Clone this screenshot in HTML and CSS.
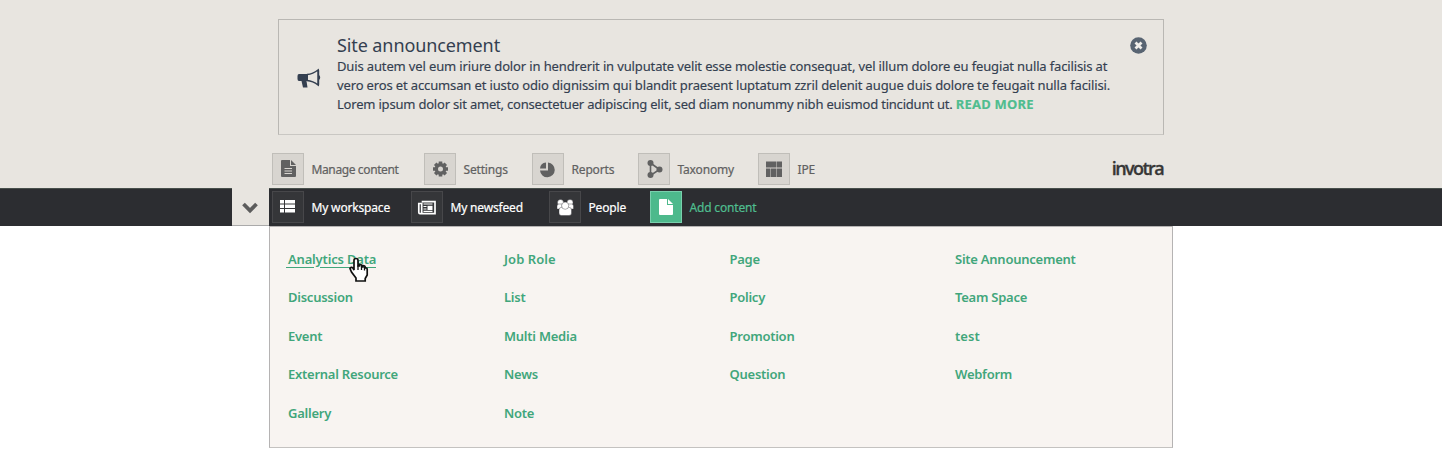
FILE: index.html
```
<!DOCTYPE html>
<html lang="en">
<head>
<meta charset="utf-8">
<title>Invotra</title>
<link rel="stylesheet" href="styles.css">
</head>
<body>
<header class="top">
  <section class="notice">
    <svg class="horn" width="24" height="22" viewBox="0 0 24 22"><path d="M2 6h9v7H9.500l1 6.500H6L4.500 13H2Q.500 13 .500 11V8Q.500 6 2 6Z" fill="#343f50"/><path d="M10 6.500Q16 6 21 2v15Q16 13 10 12.500" fill="none" stroke="#343f50" stroke-width="1.500"/><path d="M21 1q1.200 0 1.200 1.500V7q2 2.500 0 5v4.500q0 1.500-1.200 1.500Z" fill="#343f50"/></svg>
    <div class="notice-body">
      <h1 class="notice-title">Site announcement</h1>
      <p class="notice-text"><span class="line">Duis autem vel eum iriure dolor in hendrerit in vulputate velit esse molestie consequat, vel illum dolore eu feugiat nulla facilisis at</span>
      <span class="line">vero eros et accumsan et iusto odio dignissim qui blandit praesent luptatum zzril delenit augue duis dolore te feugait nulla facilisi.</span>
      <span class="line last">Lorem ipsum dolor sit amet, consectetuer adipiscing elit, sed diam nonummy nibh euismod tincidunt ut. <a class="more">READ MORE</a></span></p>
    </div>
    <svg class="close" width="17" height="17" viewBox="0 0 17 17"><circle cx="8.500" cy="8.500" r="8.300" fill="#586472"/><path d="M5.500 5.500l6 6M11.500 5.500l-6 6" stroke="#f0eeea" stroke-width="2.800"/></svg>
  </section>
  <nav class="tools">
    <div class="tool-list">
      <a class="item"><span class="box"><svg width="32" height="32" viewBox="0 0 32 32"><path d="M10 7h8v6h6v10q0 1-1 1H10q-1 0-1-1V8q0-1 1-1Z" fill="#616161"/><path d="M19 7l5 5h-5Z" fill="#616161"/><path d="M12.500 15.500h7.500M12.500 18h7.500M12.500 20.500h7.500" stroke="#d8d5d0" stroke-width="1"/></svg></span><span class="label manage">Manage content</span></a>
      <a class="item"><span class="box"><svg width="32" height="32" viewBox="0 0 32 32"><g fill="none" stroke="#616161"><circle cx="16.500" cy="16" r="4.200" stroke-width="3.400"/><path d="M16.500 8.500v3M16.500 20.500v3M9 16h3M21 16h3M11.200 10.700l2.100 2.100M19.700 19.200l2.100 2.100M21.800 10.700l-2.100 2.100M13.300 19.200l-2.100 2.100" stroke-width="3.600"/></g></svg></span><span class="label">Settings</span></a>
      <a class="item"><span class="box"><svg width="32" height="32" viewBox="0 0 32 32"><path d="M16 9.500v8H8a7.400 7.400 0 1 0 8-8Z" fill="#616161"/><path d="M14 9.500v6H8Q8.500 10 14 9.500Z" fill="#616161"/></svg></span><span class="label">Reports</span></a>
      <a class="item"><span class="box"><svg width="32" height="32" viewBox="0 0 32 32"><path d="M12.500 10l9 6.500-9 6Z" fill="none" stroke="#616161" stroke-width="1.600"/><g fill="#616161"><circle cx="12.500" cy="10" r="3"/><circle cx="21.500" cy="16.500" r="3"/><circle cx="12.500" cy="22" r="3"/></g></svg></span><span class="label">Taxonomy</span></a>
      <a class="item"><span class="box"><svg width="32" height="32" viewBox="0 0 32 32"><path d="M8 8.500h10v6H8ZM18.500 8.500H24v6h-5.500ZM8 15.500h4.500V24H8ZM13 15.500h5V24h-5ZM18.500 15.500H24V24h-5.500Z" fill="#616161"/></svg></span><span class="label">IPE</span></a>
    </div>
    <span class="brand">invotra</span>
  </nav>
</header>
<div class="bar">
  <button class="toggle" aria-label="Toggle"><svg width="16" height="12" viewBox="0 0 16 12"><path d="M1.500 2l6.500 6.500L14.500 2" fill="none" stroke="#5c5c5c" stroke-width="3.800"/></svg></button>
  <nav class="main">
    <a class="item"><span class="box"><svg width="32" height="32" viewBox="0 0 32 32"><path d="M8 9h4v3.500H8ZM13 9H23v3.500H13ZM8 13.500h4v3.500H8ZM13 13.500H23V17H13ZM8 18h4V21.500H8ZM13 18H23V21.500H13Z" fill="#fff"/></svg></span><span class="label">My workspace</span></a>
    <a class="item"><span class="box"><svg width="32" height="32" viewBox="0 0 32 32"><path d="M10.700 10.700H24v12H9q-1.200 0-1.200-1.500V12.500h2.900V22" fill="none" stroke="#fff" stroke-width="1.700"/><path d="M12.500 13h9M12.500 15.500h3M12.500 18h3M12.500 20.300h9" stroke="#fff" stroke-width="1.200"/><path d="M16.500 14.800h5v4.200h-5Z" fill="#fff"/></svg></span><span class="label">My newsfeed</span></a>
    <a class="item"><span class="box"><svg width="32" height="32" viewBox="0 0 32 32"><g fill="#fff" stroke="#353639" stroke-width=".4"><circle cx="11.500" cy="11.500" r="3"/><circle cx="21" cy="11.500" r="3"/><path d="M8 18v-3q0-2 2-2h3v5ZM19 18v-5h3.500q2 0 2 2v3Z"/><path d="M10 22v-3q0-2.800 3-2.800h6.500q3 0 3 2.800v3q0 2.500-2.500 2.500h-7.500Q10 24.500 10 22Z"/><circle cx="16.200" cy="14.700" r="3.600"/></g></svg></span><span class="label">People</span></a>
    <a class="item active"><span class="box"><svg width="32" height="32" viewBox="0 0 32 32"><path d="M10 8h7v6h6v9q0 1-1 1H10q-1 0-1-1V9q0-1 1-1Z" fill="#fff"/><path d="M18 8l5 5h-5Z" fill="#fff"/></svg></span><span class="label">Add content</span></a>
  </nav>
</div>
<div class="menu">
  <ul class="col"><li><a class="hovered">Analytics Data</a><svg class="cursor" width="20" height="26" viewBox="0 0 20 26"><path d="M7 1.500q2 0 2 2V9h1.500V7.500q2.500 0 2.500 1.500v1h1V8.500q2.200 0 2.200 2v.5q2-.5 2 1.500V18l-2 3.500V24H7v-3L2.500 15 1 11.500q1-2 3-.5l1 2V3.500q0-2 2-2Z" fill="#fff" stroke="#111" stroke-width="1.700"/><path d="M9 8.500V13M12.500 9v4M15.500 10v3.500" stroke="#111" stroke-width="1.300"/></svg></li><li>Discussion</li><li>Event</li><li>External Resource</li><li>Gallery</li></ul>
  <ul class="col"><li class="loose">Job Role</li><li>List</li><li>Multi Media</li><li>News</li><li>Note</li></ul>
  <ul class="col"><li>Page</li><li>Policy</li><li>Promotion</li><li>Question</li></ul>
  <ul class="col"><li>Site Announcement</li><li>Team Space</li><li class="loose">test</li><li>Webform</li></ul>
</div>
</body>
</html>
```
FILE: styles.css
```
* { box-sizing: border-box; }
body { margin: 0; background: #fff; font-family: "Noto Sans", "Open Sans", sans-serif; font-size: 13px; height: 450px; overflow: hidden; }
.top { height: 188px; background: #e8e5e0; padding: 19px 278px 0; display: flex; flex-direction: column; }
.notice { height: 116px; border: 1px solid #b9b7b3; border-bottom-color: #c9c7c3; display: flex; align-items: flex-start; padding: 15px 16px 0 18px; color: #343f50; }
.horn { margin-top: 33px; flex: none; }
.notice-body { margin-left: 16px; flex: 1; white-space: nowrap; }
.notice-title { margin: -1px 0 1px; font-size: 18px; font-weight: 400; line-height: 22px; letter-spacing: -.1px; }
.notice-text { margin: 0; line-height: 19px; -webkit-text-stroke: .15px; }
.line { display: block; letter-spacing: -.138px; }
.last { letter-spacing: -.2px; }
.more { color: #4fbd8f; font-weight: 700; letter-spacing: .22px; }
.close { flex: none; margin-top: 2px; }
.tools { display: flex; justify-content: space-between; margin: 18px 0 0 -6px; }
.tool-list { display: grid; grid-template-columns: 152px 108px 106px 120px 80px; }
.item { display: flex; align-items: center; gap: 7px; color: #616161; white-space: nowrap; }
.box { width: 32px; height: 32px; background: #d8d5d0; outline: 1px solid #c0beb9; outline-offset: -1px; flex: none; }
.box svg { display: block; }
.label { font-size: 12px; line-height: 20px; padding: 2px 0 0 .5px; letter-spacing: -.17px; -webkit-text-stroke: .2px; }
.manage { letter-spacing: -.38px; }
.brand { font-family: "Open Sans", sans-serif; font-size: 18px; font-weight: 600; letter-spacing: -1.6px; line-height: 30px; margin-right: 1px; color: #363636; -webkit-text-stroke: .3px; }
.bar { height: 38px; background: #2c2d31; padding-left: 232px; display: flex; border-top: 1px solid #48504c; }
.toggle { width: 37px; height: 38px; margin: -1px 0 0; padding: 2px 2px 0 0; border: 0; border-bottom: 1px solid #aaa; background: #e8e5e0; display: flex; align-items: center; justify-content: center; }
.main { display: grid; grid-template-columns: 139px 138px 101px 130px; padding: 2px 0 0 3px; height: 34px; }
.main .item { color: #fff; }
.main .box { background: #353639; outline-color: #47474a; }
.main .active { color: #4fbd8f; }
.main .active .box { background: #4db98c; outline-color: #79cfad; }
.menu { margin-left: 269px; width: 904px; height: 222px; border: 1px solid #b5b3b3; border-bottom-color: #c4c2c0; background: #f8f4f1; padding: 12.5px 0 0 18px; display: grid; grid-template-columns: 216px 225.5px 225.5px 1fr; }
.col { list-style: none; margin: 0; padding: 0; }
.col li { height: 38.5px; line-height: 38px; color: #41a67b; font-weight: 600; letter-spacing: -.25px; white-space: nowrap; position: relative; }
.col .loose { letter-spacing: .05px; }
.hovered { letter-spacing: -.18px; padding: 0 0 0 2px; margin-left: -2px; background: linear-gradient(90deg, #41a67b 28px, transparent 28px 34px, #41a67b 34px) 0 100% / 100% 1px no-repeat; }
.cursor { position: absolute; left: 61px; top: 17.5px; }
```
